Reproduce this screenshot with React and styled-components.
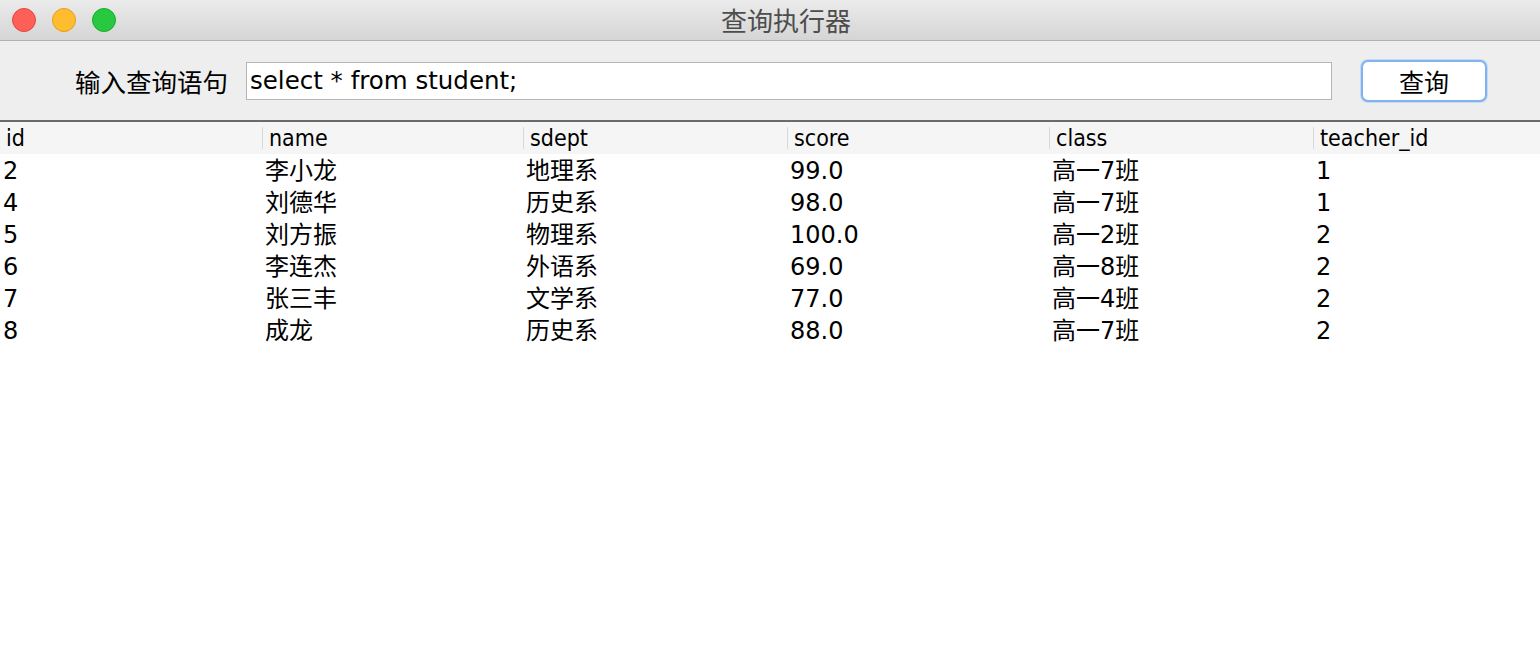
import React from 'react';
import styled, { createGlobalStyle } from 'styled-components';

const GlobalStyle = createGlobalStyle`
    html, body {
        margin: 0;
        padding: 0;
        background: #fff;
    }
    body {
        font-family: "DejaVu Sans", "Noto Sans CJK SC", sans-serif;
        color: #000;
    }
`;

const Window = styled.div`
    width: 1540px;
    height: 654px;
    display: flex;
    flex-direction: column;
    background: #fff;
    overflow: hidden;
`;

const TitleBar = styled.div`
    height: 40px;
    flex-shrink: 0;
    border-bottom: 1px solid #b1b1b1;
    background: linear-gradient(#ebebeb, #d5d5d5);
    display: flex;
    align-items: center;
    position: relative;
`;

const Lights = styled.div`
    display: flex;
    gap: 16px;
    padding-left: 12px;
`;

const Light = styled.span`
    width: 24px;
    height: 24px;
    border-radius: 50%;
    background: ${p => p.$color};
    border: 1px solid ${p => p.$edge};
    box-sizing: border-box;
`;

const Title = styled.div`
    position: absolute;
    left: 32px;
    right: 0;
    text-align: center;
    font-family: "Noto Sans CJK SC", sans-serif;
    font-size: 26px;
    line-height: 40px;
    color: #4d4d4d;
    pointer-events: none;
`;

const Toolbar = styled.div`
    height: 81px;
    flex-shrink: 0;
    background: #eeeeee;
    border-bottom: 2px solid #6b6b6b;
    display: flex;
    align-items: center;
    padding-left: 75px;
    box-sizing: border-box;
`;

const Label = styled.label`
    font-family: "Noto Sans CJK SC", sans-serif;
    font-size: 25.5px;
    margin-right: 18px;
`;

const QueryInput = styled.input`
    width: 1086px;
    height: 38px;
    box-sizing: border-box;
    border: 1px solid #b5b5b5;
    background: #fff;
    padding: 0 3px;
    font-family: "DejaVu Sans", "Noto Sans CJK SC", sans-serif;
    font-size: 24.5px;
    color: #000;
    outline: none;
`;

const Button = styled.button`
    margin-left: 29px;
    width: 126px;
    height: 42px;
    border: 2px solid #80b2ee;
    border-radius: 7px;
    background: #fff;
    font-family: "Noto Sans CJK SC", sans-serif;
    font-size: 25px;
    color: #000;
    padding: 0;
    box-shadow: 0 0 0 1px #c4dbf7;
`;

const Grid = styled.div`
    display: grid;
    grid-template-columns: 262px 261px 264px 262px 264px 1fr;
    flex-shrink: 0;
`;

const HeaderRow = styled(Grid)`
    height: 32px;
    background: #f5f5f5;
    align-items: center;
`;

const HeaderCell = styled.div`
    font-family: "DejaVu Sans", sans-serif;
    font-stretch: condensed;
    font-size: 23px;
    padding-left: 6px;
    height: 22px;
    line-height: 22px;
    border-left: ${p => (p.$first ? 'none' : '1px solid #d8d8d8')};
    display: flex;
    align-items: center;
`;

const Row = styled(Grid)`
    height: 32px;
    align-items: center;
`;

const Cell = styled.div`
    font-family: "DejaVu Sans", "Noto Sans CJK SC", sans-serif;
    font-size: 24px;
    line-height: 34px;
    padding-left: 3px;
    white-space: nowrap;
`;

const columns = ['id', 'name', 'sdept', 'score', 'class', 'teacher_id'];

const rows = [
    ['2', '李小龙', '地理系', '99.0', '高一7班', '1'],
    ['4', '刘德华', '历史系', '98.0', '高一7班', '1'],
    ['5', '刘方振', '物理系', '100.0', '高一2班', '2'],
    ['6', '李连杰', '外语系', '69.0', '高一8班', '2'],
    ['7', '张三丰', '文学系', '77.0', '高一4班', '2'],
    ['8', '成龙', '历史系', '88.0', '高一7班', '2'],
];

export default function App() {
    return (
        <Window>
            <GlobalStyle />
            <TitleBar>
                <Lights>
                    <Light $color="#fe5f57" $edge="#e2463f" />
                    <Light $color="#febc2e" $edge="#e1a116" />
                    <Light $color="#28c840" $edge="#14ae2a" />
                </Lights>
                <Title>查询执行器</Title>
            </TitleBar>
            <Toolbar>
                <Label>输入查询语句</Label>
                <QueryInput defaultValue="select * from student;" />
                <Button>查询</Button>
            </Toolbar>
            <HeaderRow>
                {columns.map((c, i) => (
                    <HeaderCell key={c} $first={i === 0}>{c}</HeaderCell>
                ))}
            </HeaderRow>
            {rows.map(r => (
                <Row key={r[0]}>
                    {r.map((v, i) => (
                        <Cell key={i}>{v}</Cell>
                    ))}
                </Row>
            ))}
        </Window>
    );
}
